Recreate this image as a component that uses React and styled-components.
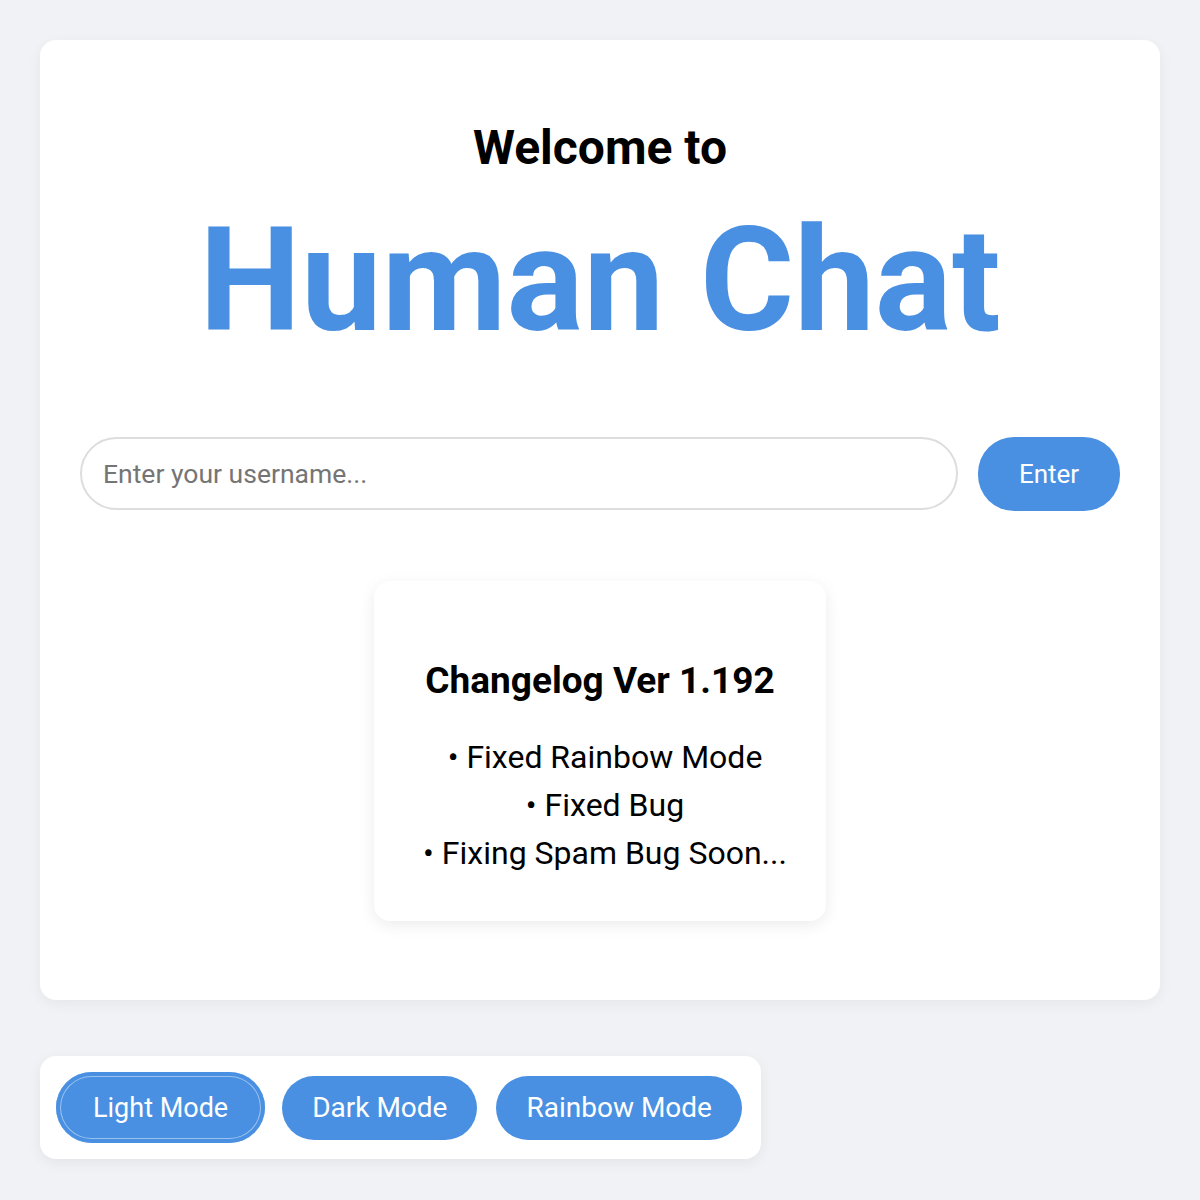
import React from "react";
import styled, { createGlobalStyle } from "styled-components";

const GlobalStyle = createGlobalStyle`
  * {
    box-sizing: border-box;
  }
  body {
    margin: 0;
    background-color: #f0f2f5;
    font-family: Roboto, "Liberation Sans", Arial, sans-serif;
  }
`;

const Page = styled.div`
  padding: 40px;
  display: flex;
  flex-direction: column;
  align-items: flex-start;
  gap: 56px;
`;

const MainCard = styled.div`
  width: 100%;
  background-color: white;
  border-radius: 16px;
  padding: 40px 40px 79px;
  box-shadow: 0 4px 14px rgba(0, 0, 0, 0.05);
  display: flex;
  flex-direction: column;
  align-items: center;
`;

const WelcomeText = styled.h2`
  margin: 39px 0 0;
  font-size: 48px;
  line-height: 1.2;
  font-weight: 700;
  color: #000;
`;

const BrandTitle = styled.h1`
  margin: 32px 0 0;
  font-size: 144px;
  line-height: 1;
  font-weight: 700;
  color: #4a90e2;
`;

const LoginRow = styled.div`
  width: 100%;
  margin-top: 84px;
  display: flex;
  align-items: center;
  gap: 20px;
`;

const UsernameInput = styled.input`
  flex: 1;
  height: 73px;
  border: 2px solid #dddddd;
  border-radius: 37px;
  padding: 0 21px;
  font-family: inherit;
  font-size: 26.5px;
  color: #333;
  outline: none;

  &::placeholder {
    color: #757575;
  }
`;

const PillButton = styled.button`
  height: ${(props) => (props.active ? "71px" : "64px")};
  padding: 0 ${(props) => (props.active ? "37px" : "30px")};
  margin: 0 ${(props) => (props.active ? "0" : "2px")};
  border: none;
  border-radius: 36px;
  background-color: #4a90e2;
  color: white;
  font-family: inherit;
  font-size: ${(props) => (props.active ? "27px" : "28px")};
  cursor: pointer;
  box-shadow: ${(props) =>
    props.active ? "inset 0 0 0 4px #4a90e2, inset 0 0 0 5px rgba(255, 255, 255, 0.45)" : "none"};
`;

const EnterButton = styled(PillButton)`
  height: 74px;
  width: 142px;
  padding: 0;
  margin: 0;
  font-size: 26px;
`;

const ChangelogCard = styled.div`
  margin-top: 70px;
  width: 452px;
  background-color: white;
  border-radius: 16px;
  padding: 80px 10px 44px;
  box-shadow: 0 4px 16px rgba(0, 0, 0, 0.08);
  text-align: center;
`;

const ChangelogTitle = styled.h3`
  margin: 0;
  font-size: 37px;
  line-height: 1.1;
  font-weight: 700;
  color: #000;
`;

const ChangelogList = styled.ul`
  list-style: none;
  margin: 32px 0 0;
  padding: 0 0 0 10px;
`;

const ChangelogItem = styled.li`
  font-size: 32px;
  line-height: 48px;
  color: #000;
`;

const ThemeBar = styled.div`
  background-color: white;
  border-radius: 16px;
  padding: 16px 17px 16px 16px;
  display: flex;
  align-items: center;
  gap: 15px;
  box-shadow: 0 4px 14px rgba(0, 0, 0, 0.06);
`;

const changes = ["Fixed Rainbow Mode", "Fixed Bug", "Fixing Spam Bug Soon..."];
const modes = ["Light Mode", "Dark Mode", "Rainbow Mode"];

const App = () => {
  return (
    <>
      <GlobalStyle />
      <Page>
        <MainCard>
          <WelcomeText>Welcome to</WelcomeText>
          <BrandTitle>Human Chat</BrandTitle>
          <LoginRow>
            <UsernameInput placeholder="Enter your username..." />
            <EnterButton>Enter</EnterButton>
          </LoginRow>
          <ChangelogCard>
            <ChangelogTitle>Changelog Ver 1.192</ChangelogTitle>
            <ChangelogList>
              {changes.map((change) => (
                <ChangelogItem key={change}>• {change}</ChangelogItem>
              ))}
            </ChangelogList>
          </ChangelogCard>
        </MainCard>
        <ThemeBar>
          {modes.map((mode, index) => (
            <PillButton key={mode} active={index === 0}>
              {mode}
            </PillButton>
          ))}
        </ThemeBar>
      </Page>
    </>
  );
};

export default App;
